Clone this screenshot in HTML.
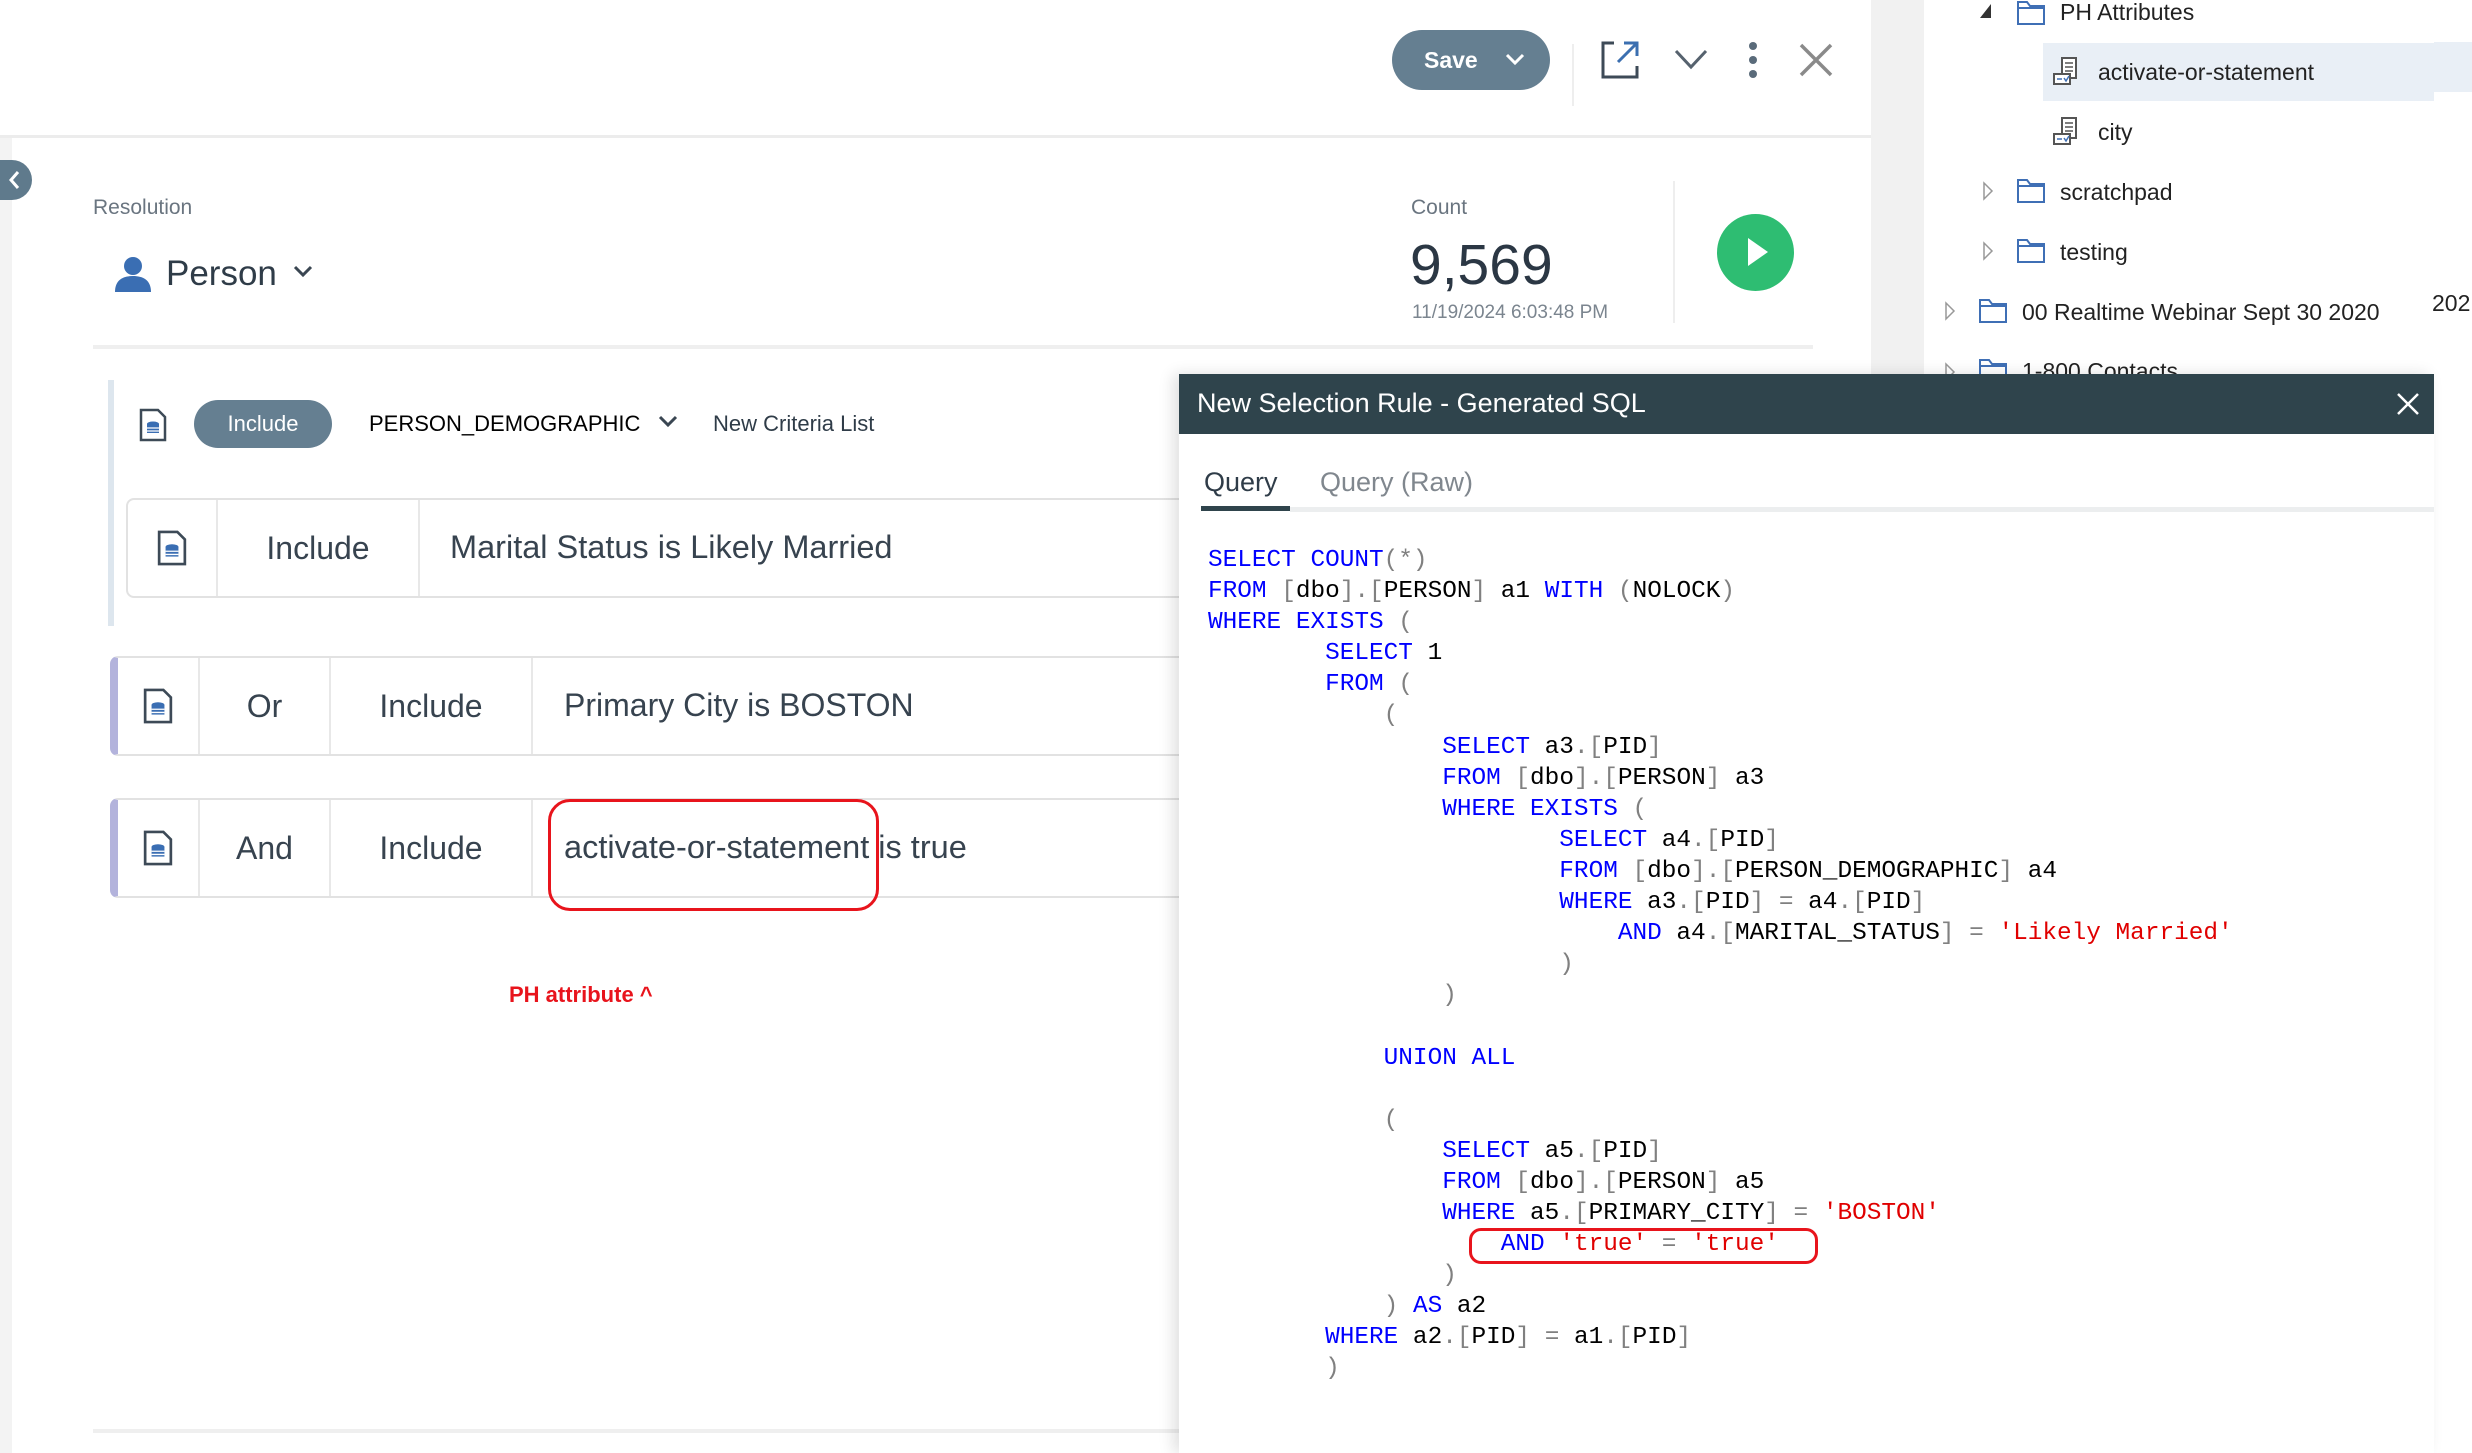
<!DOCTYPE html>
<html><head><meta charset="utf-8"><style>
*{margin:0;padding:0;box-sizing:border-box}
body{width:2472px;height:1453px;position:relative;overflow:hidden;background:#fff;font-family:"Liberation Sans",sans-serif;color:#2f3c48}
.a{position:absolute;white-space:nowrap}
.k{color:#0000ff}.p{color:#808080}.s{color:#e00000}
pre.a{font-family:"Liberation Mono",monospace;font-size:24.4px;line-height:31.1px;color:#000;white-space:pre}
.row{position:absolute;border:2px solid #e2e2e2;border-radius:8px;background:#fff;height:100px}
.cell{position:absolute;top:0;height:96px;border-right:2px solid #e8e8e8;display:flex;align-items:center;justify-content:center;font-size:32px;color:#37434f}
.tree{font-size:23px;color:#222}
</style></head><body>
<div class="a" style="left:0;top:136px;width:12px;height:1317px;background:#f3f3f3"></div>
<div class="a" style="left:1871px;top:0;width:53px;height:1453px;background:#f1f1f1"></div>
<div class="a" style="left:0;top:135px;width:1871px;height:3px;background:#ececec"></div>
<div class="a" style="left:1392px;top:30px;width:158px;height:60px;border-radius:30px;background:#657f91;color:#fff;font-size:23px;font-weight:bold;line-height:60px;padding-left:32px">Save
<svg style="position:absolute;left:112px;top:22px" width="22" height="16" viewBox="0 0 22 16"><path d="M3 3l8 8 8-8" stroke="#fff" stroke-width="3" fill="none"/></svg></div>
<div class="a" style="left:1572px;top:44px;width:2px;height:62px;background:#eee"></div>
<svg class="a" style="left:1600px;top:40px" width="40" height="40" viewBox="0 0 40 40"><path d="M14 3H3v34h34V26" stroke="#3d4a57" stroke-width="3" fill="none"/><path d="M18 22L36 4M24 3h13v13" stroke="#3b6fb0" stroke-width="3" fill="none"/></svg>
<svg class="a" style="left:1674px;top:48px" width="34" height="22" viewBox="0 0 34 22"><path d="M2 3l15 16L32 3" stroke="#56626e" stroke-width="3" fill="none"/></svg>
<svg class="a" style="left:1746px;top:40px" width="14" height="40"><circle cx="7" cy="6" r="4" fill="#5a6b7a"/><circle cx="7" cy="20" r="4" fill="#5a6b7a"/><circle cx="7" cy="34" r="4" fill="#5a6b7a"/></svg>
<svg class="a" style="left:1798px;top:42px" width="36" height="36"><path d="M3 3l30 30M33 3L3 33" stroke="#8a8a8a" stroke-width="3.5"/></svg>
<div class="a" style="left:-20px;top:160px;width:52px;height:40px;border-radius:20px;background:#5f7a8c"></div>
<svg class="a" style="left:6px;top:169px" width="16" height="22"><path d="M12 3L5 11l7 8" stroke="#fff" stroke-width="3" fill="none"/></svg>
<div class="a" style="left:93px;top:196px;font-size:21px;color:#6a7580">Resolution</div>
<svg class="a" style="left:114px;top:256px" width="38" height="36" viewBox="0 0 38 36"><circle cx="19" cy="10" r="9" fill="#3a6eb3"/><path d="M1 36c0-12 8-16 18-16s18 4 18 16z" fill="#3a6eb3"/></svg>
<div class="a" style="left:166px;top:254px;font-size:35px;color:#2f3c48">Person</div>
<svg class="a" style="left:292px;top:264px" width="22" height="16"><path d="M3 3l8 8 8-8" stroke="#3a4652" stroke-width="3" fill="none"/></svg>
<div class="a" style="left:1411px;top:196px;font-size:21px;color:#6a7580">Count</div>
<div class="a" style="left:1410px;top:232px;font-size:57px;color:#2b3744">9,569</div>
<div class="a" style="left:1412px;top:302px;font-size:19px;color:#7b858f">11/19/2024 6:03:48 PM</div>
<div class="a" style="left:1673px;top:181px;width:2px;height:142px;background:#eee"></div>
<div class="a" style="left:1717px;top:214px;width:77px;height:77px;border-radius:50%;background:#2ebd72"></div>
<svg class="a" style="left:1746px;top:236px" width="24" height="32"><path d="M2 2l20 14L2 30z" fill="#fff"/></svg>
<div class="a" style="left:93px;top:345px;width:1720px;height:4px;background:#efefef"></div>
<div class="a" style="left:108px;top:380px;width:6px;height:246px;background:#dde6ee"></div>
<svg class="a" style="left:139px;top:408px" width="28" height="34" viewBox="0 0 28 34"><path d="M2 2h17l7 7v23H2z" stroke="#3d4a57" stroke-width="2.5" fill="#fff"/><ellipse cx="14" cy="16" rx="6" ry="2.5" fill="#3a6eb3"/><rect x="8" y="16" width="12" height="9" fill="#3a6eb3"/><path d="M8 20h12M8 23h12" stroke="#fff" stroke-width="1.2"/></svg>
<div class="a" style="left:194px;top:400px;width:138px;height:48px;border-radius:24px;background:#657f91;color:#fff;font-size:22px;text-align:center;line-height:48px">Include</div>
<div class="a" style="left:369px;top:411px;font-size:22px;color:#000">PERSON_DEMOGRAPHIC</div>
<svg class="a" style="left:657px;top:414px" width="22" height="16"><path d="M3 3l8 8 8-8" stroke="#3a4652" stroke-width="3" fill="none"/></svg>
<div class="a" style="left:713px;top:411px;font-size:22px;color:#2f3c48">New Criteria List</div>
<div class="row" style="left:126px;top:498px;width:1200px">
 <div class="cell" style="left:0;width:90px"><svg width="30" height="38" viewBox="0 0 28 34"><path d="M2 2h17l7 7v23H2z" stroke="#3d4a57" stroke-width="2.5" fill="#fff"/><ellipse cx="14" cy="16" rx="6" ry="2.5" fill="#3a6eb3"/><rect x="8" y="16" width="12" height="9" fill="#3a6eb3"/><path d="M8 20h12M8 23h12" stroke="#fff" stroke-width="1.2"/></svg></div>
 <div class="cell" style="left:90px;width:202px">Include</div>
 <div class="a" style="left:322px;top:29px;font-size:32.5px;color:#37434f">Marital Status is Likely Married</div>
</div>
<div class="row" style="left:110px;top:656px;width:1200px;border-left:8px solid #b3b3dc">
 <div class="cell" style="left:0;width:82px"><svg width="30" height="38" viewBox="0 0 28 34"><path d="M2 2h17l7 7v23H2z" stroke="#3d4a57" stroke-width="2.5" fill="#fff"/><ellipse cx="14" cy="16" rx="6" ry="2.5" fill="#3a6eb3"/><rect x="8" y="16" width="12" height="9" fill="#3a6eb3"/><path d="M8 20h12M8 23h12" stroke="#fff" stroke-width="1.2"/></svg></div>
 <div class="cell" style="left:82px;width:131px">Or</div>
 <div class="cell" style="left:213px;width:202px">Include</div>
 <div class="a" style="left:446px;top:29px;font-size:32px;color:#37434f">Primary City is BOSTON</div>
</div>
<div class="row" style="left:110px;top:798px;width:1200px;border-left:8px solid #b3b3dc">
 <div class="cell" style="left:0;width:82px"><svg width="30" height="38" viewBox="0 0 28 34"><path d="M2 2h17l7 7v23H2z" stroke="#3d4a57" stroke-width="2.5" fill="#fff"/><ellipse cx="14" cy="16" rx="6" ry="2.5" fill="#3a6eb3"/><rect x="8" y="16" width="12" height="9" fill="#3a6eb3"/><path d="M8 20h12M8 23h12" stroke="#fff" stroke-width="1.2"/></svg></div>
 <div class="cell" style="left:82px;width:131px">And</div>
 <div class="cell" style="left:213px;width:202px">Include</div>
 <div class="a" style="left:446px;top:29px;font-size:32.5px;color:#37434f">activate-or-statement is true</div>
</div>
<div class="a" style="left:548px;top:799px;width:331px;height:112px;border:3px solid #e8141c;border-radius:22px"></div>
<div class="a" style="left:509px;top:982px;font-size:22px;font-weight:bold;color:#e8141c">PH attribute ^</div>
<div class="a" style="left:93px;top:1429px;width:1100px;height:4px;background:#efefef"></div>
<div class="a" style="left:2434px;top:42px;width:38px;height:50px;background:#e9eff6"></div>
<div class="a" style="left:2043px;top:43px;width:391px;height:58px;background:#e9eff6"></div>
<svg class="a" style="left:1978px;top:2px" width="16" height="18"><path d="M13 2v14H2z" fill="#333"/></svg>
<svg class="a" style="left:2016px;top:0" width="30" height="26"><path d="M2 2h9l3 4h14v18H2z" stroke="#3f6fb5" stroke-width="2" fill="#fff"/><path d="M2 8h26" stroke="#3f6fb5" stroke-width="2"/></svg>
<div class="a tree" style="left:2060px;top:-1px">PH Attributes</div>
<svg class="a" style="left:2052px;top:56px" width="32" height="32"><rect x="10" y="2" width="14" height="20" stroke="#555" stroke-width="2" fill="#fff"/><path d="M13 7h8M13 11h8M13 15h8" stroke="#555" stroke-width="1.5"/><rect x="2" y="18" width="16" height="10" stroke="#555" stroke-width="2" fill="#fff"/><path d="M5 23h5M12 22l2 3 3-5" stroke="#3f6fb5" stroke-width="1.5" fill="none"/></svg>
<div class="a tree" style="left:2098px;top:59px">activate-or-statement</div>
<svg class="a" style="left:2052px;top:116px" width="32" height="32"><rect x="10" y="2" width="14" height="20" stroke="#555" stroke-width="2" fill="#fff"/><path d="M13 7h8M13 11h8M13 15h8" stroke="#555" stroke-width="1.5"/><rect x="2" y="18" width="16" height="10" stroke="#555" stroke-width="2" fill="#fff"/><path d="M5 23h5M12 22l2 3 3-5" stroke="#3f6fb5" stroke-width="1.5" fill="none"/></svg>
<div class="a tree" style="left:2098px;top:119px">city</div>
<svg class="a" style="left:1982px;top:181px" width="12" height="20"><path d="M2 2l8 8-8 8z" stroke="#999" stroke-width="1.5" fill="none"/></svg>
<svg class="a" style="left:2016px;top:178px" width="30" height="26"><path d="M2 2h9l3 4h14v18H2z" stroke="#3f6fb5" stroke-width="2" fill="#fff"/><path d="M2 8h26" stroke="#3f6fb5" stroke-width="2"/></svg>
<div class="a tree" style="left:2060px;top:179px">scratchpad</div>
<svg class="a" style="left:1982px;top:241px" width="12" height="20"><path d="M2 2l8 8-8 8z" stroke="#999" stroke-width="1.5" fill="none"/></svg>
<svg class="a" style="left:2016px;top:238px" width="30" height="26"><path d="M2 2h9l3 4h14v18H2z" stroke="#3f6fb5" stroke-width="2" fill="#fff"/><path d="M2 8h26" stroke="#3f6fb5" stroke-width="2"/></svg>
<div class="a tree" style="left:2060px;top:239px">testing</div>
<svg class="a" style="left:1944px;top:301px" width="12" height="20"><path d="M2 2l8 8-8 8z" stroke="#999" stroke-width="1.5" fill="none"/></svg>
<svg class="a" style="left:1978px;top:298px" width="30" height="26"><path d="M2 2h9l3 4h14v18H2z" stroke="#3f6fb5" stroke-width="2" fill="#fff"/><path d="M2 8h26" stroke="#3f6fb5" stroke-width="2"/></svg>
<div class="a tree" style="left:2022px;top:299px">00 Realtime Webinar Sept 30 2020</div>
<div class="a tree" style="left:2432px;top:290px">202</div>
<svg class="a" style="left:1944px;top:362px" width="12" height="20"><path d="M2 2l8 8-8 8z" stroke="#999" stroke-width="1.5" fill="none"/></svg>
<svg class="a" style="left:1978px;top:358px" width="30" height="26"><path d="M2 2h9l3 4h14v18H2z" stroke="#3f6fb5" stroke-width="2" fill="#fff"/><path d="M2 8h26" stroke="#3f6fb5" stroke-width="2"/></svg>
<div class="a tree" style="left:2022px;top:358px">1-800 Contacts</div>
<div class="a" style="left:1179px;top:374px;width:1255px;height:1079px;background:#fff;box-shadow:-6px 0 14px rgba(0,0,0,.12);overflow:hidden">
 <div style="position:absolute;left:0;top:0;width:100%;height:60px;background:#2f444c"></div>
 <div class="a" style="left:18px;top:14px;font-size:27px;color:#fff">New Selection Rule - Generated SQL</div>
 <svg class="a" style="left:1217px;top:18px" width="24" height="24"><path d="M2 2l20 20M22 2L2 22" stroke="#fff" stroke-width="2.5"/></svg>
 <div class="a" style="left:25px;top:93px;font-size:27px;color:#2f3c48">Query</div>
 <div class="a" style="left:141px;top:93px;font-size:27px;color:#80878e">Query (Raw)</div>
 <div class="a" style="left:111px;top:133px;width:1316px;height:5px;background:#eceeef"></div>
 <div class="a" style="left:22px;top:132px;width:89px;height:5px;background:#2f444c"></div>
<pre class="a" style="left:29px;top:171px"><span class="k">SELECT COUNT</span><span class="p">(*)</span>
<span class="k">FROM</span> <span class="p">[</span>dbo<span class="p">].[</span>PERSON<span class="p">]</span> a1 <span class="k">WITH</span> <span class="p">(</span>NOLOCK<span class="p">)</span>
<span class="k">WHERE EXISTS</span> <span class="p">(</span>
        <span class="k">SELECT</span> 1
        <span class="k">FROM</span> <span class="p">(</span>
            <span class="p">(</span>
                <span class="k">SELECT</span> a3<span class="p">.[</span>PID<span class="p">]</span>
                <span class="k">FROM</span> <span class="p">[</span>dbo<span class="p">].[</span>PERSON<span class="p">]</span> a3
                <span class="k">WHERE EXISTS</span> <span class="p">(</span>
                        <span class="k">SELECT</span> a4<span class="p">.[</span>PID<span class="p">]</span>
                        <span class="k">FROM</span> <span class="p">[</span>dbo<span class="p">].[</span>PERSON_DEMOGRAPHIC<span class="p">]</span> a4
                        <span class="k">WHERE</span> a3<span class="p">.[</span>PID<span class="p">]</span> <span class="p">=</span> a4<span class="p">.[</span>PID<span class="p">]</span>
                            <span class="k">AND</span> a4<span class="p">.[</span>MARITAL_STATUS<span class="p">]</span> <span class="p">=</span> <span class="s">'Likely Married'</span>
                        <span class="p">)</span>
                <span class="p">)</span>

            <span class="k">UNION ALL</span>

            <span class="p">(</span>
                <span class="k">SELECT</span> a5<span class="p">.[</span>PID<span class="p">]</span>
                <span class="k">FROM</span> <span class="p">[</span>dbo<span class="p">].[</span>PERSON<span class="p">]</span> a5
                <span class="k">WHERE</span> a5<span class="p">.[</span>PRIMARY_CITY<span class="p">]</span> <span class="p">=</span> <span class="s">'BOSTON'</span>
                    <span class="k">AND</span> <span class="s">'true'</span> <span class="p">=</span> <span class="s">'true'</span>
                <span class="p">)</span>
            <span class="p">)</span> <span class="k">AS</span> a2
        <span class="k">WHERE</span> a2<span class="p">.[</span>PID<span class="p">]</span> <span class="p">=</span> a1<span class="p">.[</span>PID<span class="p">]</span>
        <span class="p">)</span></pre>
 <div class="a" style="left:290px;top:854px;width:349px;height:36px;border:3px solid #e8141c;border-radius:12px"></div>
</div>
</body></html>
